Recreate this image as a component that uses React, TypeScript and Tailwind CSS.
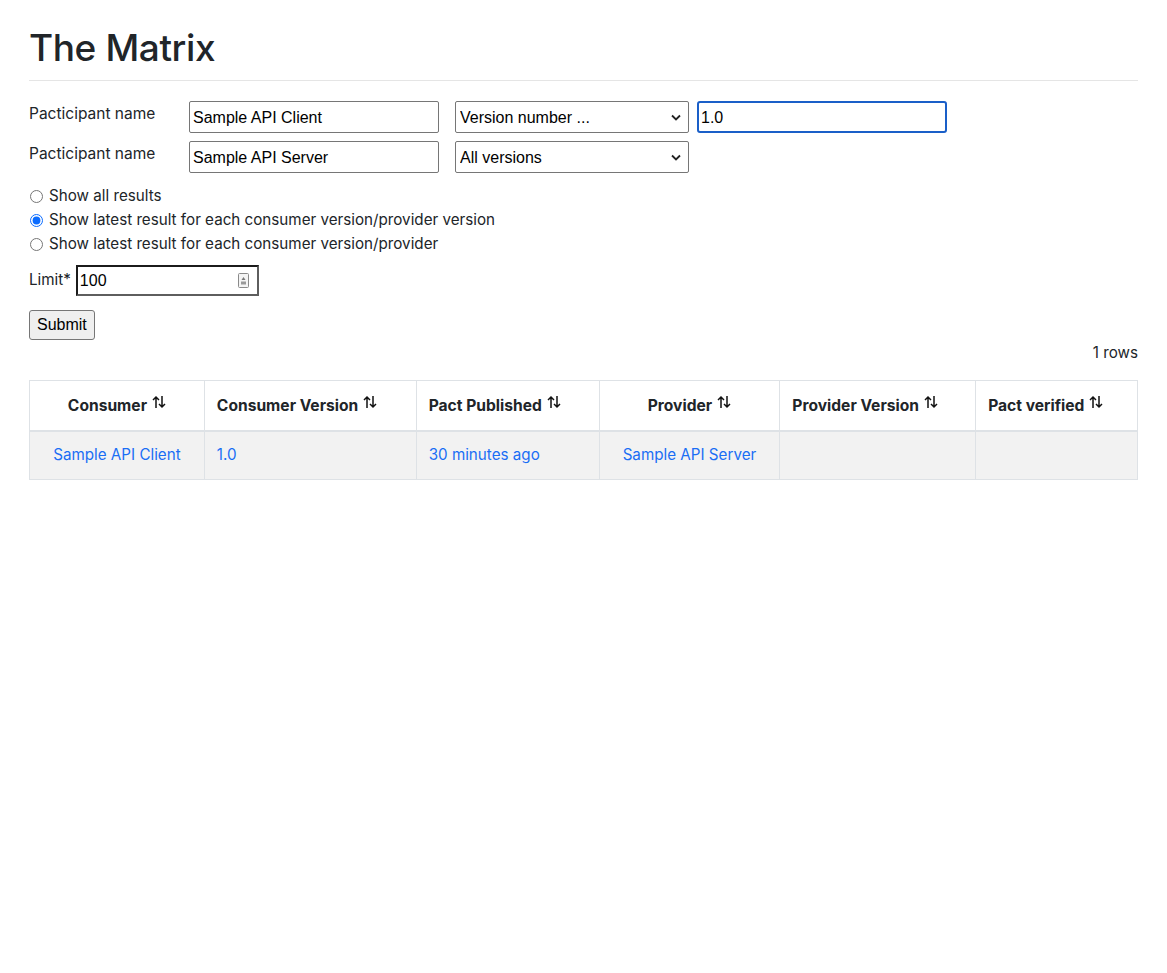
import React from "react";

const SortIcon = () => (
  <svg width="14" height="14" viewBox="0 0 14 14" className="inline-block align-top ml-[5px] mt-[1px]" fill="none" stroke="#111" strokeWidth="1.5">
    <path d="M4 13V2M1 5l3-3 3 3" />
    <path d="M10 1v11M7 9l3 3 3-3" />
  </svg>
);

const Chevron = () => (
  <svg width="10" height="7" viewBox="0 0 10 7" className="pointer-events-none absolute right-[8px] top-[13px]" fill="none" stroke="#222" strokeWidth="1.8">
    <path d="M1 1.5l4 4 4-4" />
  </svg>
);

const inputCls =
  "h-[32px] w-[250px] border border-[#767676] rounded-[2px] px-[3px] pt-[1px] text-[16px] text-black outline-none font-['Liberation_Sans',Arial,sans-serif]";

const SelectBox: React.FC<{ value: string }> = ({ value }) => (
  <div className="relative">
    <select
      defaultValue={value}
      className="h-[32px] w-[234px] appearance-none border border-[#767676] rounded-[2px] pl-[4px] pr-[24px] pt-[1px] text-[16px] text-black bg-white font-['Liberation_Sans',Arial,sans-serif]"
    >
      <option>{value}</option>
    </select>
    <Chevron />
  </div>
);

const headers = [
  { label: "Consumer", w: "w-[175px]", center: true },
  { label: "Consumer Version", w: "w-[212px]", center: false },
  { label: "Pact Published", w: "w-[183px]", center: false },
  { label: "Provider", w: "w-[181px]", center: true },
  { label: "Provider Version", w: "w-[196px]", center: false },
  { label: "Pact verified", w: "w-[162px]", center: false },
];

export default function App() {
  return (
    <div className="min-h-[973px] bg-white px-[29px] pt-[26px] text-[15.2px] text-[#212529] font-['Inter','Noto_Sans',sans-serif]">
      <h1 className="text-[37px] font-medium leading-[1.2] tracking-[-0.4px] pb-[10px] border-b border-[#e5e5e5]">
        The Matrix
      </h1>

      <div className="mt-[20px] flex flex-col gap-[8px]">
        <div className="flex items-start">
          <label className="w-[160px] pt-[1px] text-[15.5px]">Pacticipant name</label>
          <input className={inputCls} defaultValue="Sample API Client" />
          <div className="ml-[16px]">
            <SelectBox value="Version number ..." />
          </div>
          <input
            className="ml-[8px] h-[32px] w-[250px] border-2 border-[#1a5fc8] rounded-[3px] px-[2px] pt-[1px] text-[16px] text-black outline-none font-['Liberation_Sans',Arial,sans-serif]"
            defaultValue="1.0"
          />
        </div>
        <div className="flex items-start">
          <label className="w-[160px] pt-[1px] text-[15.5px]">Pacticipant name</label>
          <input className={inputCls} defaultValue="Sample API Server" />
          <div className="ml-[16px]">
            <SelectBox value="All versions" />
          </div>
        </div>
      </div>

      <div className="mt-[13px] flex flex-col gap-[4px]">
        {[
          ["Show all results", false],
          ["Show latest result for each consumer version/provider version", true],
          ["Show latest result for each consumer version/provider", false],
        ].map(([t, c]) => (
          <label key={t as string} className="flex items-center h-[20px]">
            <input
              type="radio"
              name="latest"
              defaultChecked={c as boolean}
              className="m-0 ml-[1px] mr-[6px] h-[13px] w-[13px] accent-[#0b6cff]"
            />
            {t as string}
          </label>
        ))}
      </div>

      <div className="mt-[11px] flex items-center">
        <span className="mr-[5px]">Limit*</span>
        <div className="flex items-center h-[31px] w-[183px] border-2 border-t-[#1b1b1b] border-l-[#1b1b1b] border-r-[#5e5e5e] border-b-[#5e5e5e] pl-[2px] pr-[8px]">
          <input
            className="flex-1 min-w-0 outline-none text-[16px] text-black font-['Liberation_Sans',Arial,sans-serif]"
            defaultValue="100"
          />
          <svg width="11" height="15" viewBox="0 0 11 15" fill="none">
            <rect x="0.5" y="0.5" width="10" height="14" rx="1" fill="#f4f4f4" stroke="#8a8a8a" />
            <path d="M3.5 7L5.5 4L7.5 7Z" fill="#777" />
            <rect x="3" y="8.5" width="5" height="3" fill="#999" />
          </svg>
        </div>
      </div>

      <button className="mt-[14px] h-[30px] px-[7px] border border-[#767676] rounded-[3px] bg-[#efefef] text-[16px] text-black font-['Liberation_Sans',Arial,sans-serif]">
        Submit
      </button>

      <div className="text-right mt-[2px]">1 rows</div>

      <table className="mt-[15px] w-full border-collapse border border-[#dee2e6]">
        <thead>
          <tr className="h-[50px] border-b-2 border-[#dee2e6]">
            {headers.map((h) => (
              <th
                key={h.label}
                className={`${h.w} border-x border-[#dee2e6] px-[12px] text-[15.6px] font-bold text-[#212529] ${h.center ? "text-center" : "text-left"}`}
              >
                {h.label}
                <SortIcon />
              </th>
            ))}
          </tr>
        </thead>
        <tbody>
          <tr className="h-[49px] bg-[#f2f2f2] text-[#1a6ef5]">
            <td className="border-x border-[#dee2e6] px-[12px] text-center">Sample API Client</td>
            <td className="border-x border-[#dee2e6] px-[12px]">1.0</td>
            <td className="border-x border-[#dee2e6] px-[12px]">30 minutes ago</td>
            <td className="border-x border-[#dee2e6] px-[12px] text-center">Sample API Server</td>
            <td className="border-x border-[#dee2e6] px-[12px]"></td>
            <td className="border-x border-[#dee2e6] px-[12px]"></td>
          </tr>
        </tbody>
      </table>
    </div>
  );
}
